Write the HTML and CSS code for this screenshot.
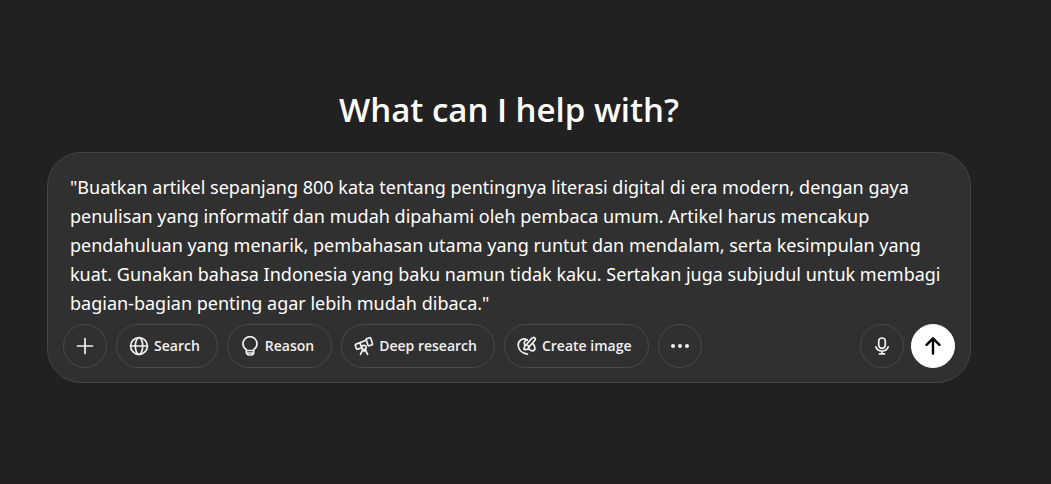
FILE: index.html
```html
<!DOCTYPE html>
<html lang="en">
<head>
<meta charset="utf-8">
<title>Chat</title>
<meta name="viewport" content="width=device-width, initial-scale=1">
<link rel="stylesheet" href="styles.css">
</head>
<body>
<main class="home">
  <h1 class="title">What can I help with?</h1>
  <form class="composer">
    <textarea class="prompt" rows="5" aria-label="Message">"Buatkan artikel sepanjang 800 kata tentang pentingnya literasi digital di era modern, dengan gaya penulisan yang informatif dan mudah dipahami oleh pembaca umum. Artikel harus mencakup pendahuluan yang menarik, pembahasan utama yang runtut dan mendalam, serta kesimpulan yang kuat. Gunakan bahasa Indonesia yang baku namun tidak kaku. Sertakan juga subjudul untuk membagi bagian-bagian penting agar lebih mudah dibaca."</textarea>
    <div class="toolbar">
      <div class="tools">
        <button class="tool round" type="button" aria-label="Add">
          <svg class="icon" viewBox="0 0 20 20"><path d="M10 2.500v15M2.500 10h15"/></svg>
        </button>
        <button class="tool" type="button">
          <svg class="icon" viewBox="0 0 20 20"><circle cx="10" cy="10" r="8.400"/><ellipse cx="10" cy="10" rx="3.700" ry="8.400"/><path d="M1.600 10h16.800"/></svg>
          <span>Search</span>
        </button>
        <button class="tool" type="button">
          <svg class="icon" viewBox="0 0 20 20"><path d="M6.300 13.400C4.300 12.200 3 10.100 3 7.700a7 7 0 0 1 14 0c0 2.400-1.300 4.500-3.300 5.700v2.900c0 1.500-1.200 2.700-2.700 2.700H9c-1.500 0-2.700-1.200-2.700-2.700zM6.300 14.500h7.400M7 17h6"/></svg>
          <span>Reason</span>
        </button>
        <button class="tool" type="button">
          <svg class="icon" viewBox="0 0 20 20"><path d="M12 3.100l3.500-1.400c.5-.2 1 .1 1.200.5l1.800 5.500c.2.500-.1 1-.6 1.200l-2.800.8c-.5.200-1-.1-1.200-.5z"/><path d="M12.300 4.300L2.100 8.100c-.6.200-.9.800-.7 1.300l1 3.100c.2.600.7.800 1.300.6l4.100-1.300M6 6.900l1.200 3.700"/><circle cx="10" cy="11.500" r="2.200"/><path d="M8.800 13.400L6.500 18.300M11.200 13.400l2.400 4.900M10 13.700v1.800"/></svg>
          <span>Deep research</span>
        </button>
        <button class="tool" type="button">
          <svg class="icon" viewBox="0 0 20 20"><path d="M10.300 4.200C6.300 1.200 1 4.200 1.200 9.300c.2 4.700 4 8.100 9.300 8.900"/><path d="M10.200 4.200C7.200 4.500 6.600 6.700 7.800 9"/><path d="M8.800 9.200l5.900-6.800c.9-1.100 2.300-1.200 3-.5s.7 1.900-.2 2.900l-6.100 6.800"/><path d="M8.900 9c1.700-.1 3 1.100 3 2.700-.7 1.700-2.800 2.200-5.100 1.400.6-1 .4-3.700 2.100-4.100z"/><path d="M15.600 7.500c3 2.700 3.200 6.800.2 7.300-2.400.3-3.200-1.400-4.500-2"/></svg>
          <span>Create image</span>
        </button>
        <button class="tool round" type="button" aria-label="More">
          <svg class="icon dots" viewBox="0 0 20 20"><circle cx="3" cy="10" r="2"/><circle cx="10" cy="10" r="2"/><circle cx="17" cy="10" r="2"/></svg>
        </button>
      </div>
      <div class="actions">
        <button class="tool round" type="button" aria-label="Dictate">
          <svg class="icon" viewBox="0 0 20 20"><rect x="6.700" y="2" width="6.600" height="10.400" rx="3.300"/><path d="M3.800 10.800c.8 2.600 3.200 4.300 6.200 4.300s5.400-1.700 6.200-4.300M10 15.100v2.700M7.500 17.900h5"/></svg>
        </button>
        <button class="send" type="submit" aria-label="Send">
          <svg class="icon arrow" viewBox="0 0 20 20"><path d="M10 17.600V2.500M3.500 8.800L10 2.300l6.500 6.500"/></svg>
        </button>
      </div>
    </div>
  </form>
</main>
</body>
</html>
```
FILE: styles.css
```css
* {
  box-sizing: border-box;
}

body {
  margin: 0;
  min-height: 100vh;
  background: #212121;
  border-bottom: 2px solid #231e20;
  color: #fff;
  font-family: "Segoe UI", "Open Sans", "Noto Sans", sans-serif;
}

.home {
  padding: 88px 80px 0 47px;
}

.title {
  margin: 0 0 20px;
  font-size: 33px;
  font-weight: 600;
  line-height: 44px;
  text-align: center;
}

.composer {
  padding: 20px 15px 14px;
  background: #303030;
  border: 1px solid #454545;
  border-radius: 34px;
}

.prompt {
  display: block;
  width: 100%;
  margin: 0;
  padding: 0 7px;
  border: 0;
  outline: 0;
  background: transparent;
  color: #fff;
  font-family: "Segoe UI", "Noto Sans", sans-serif;
  font-size: 18px;
  line-height: 29px;
  resize: none;
  overflow: hidden;
}

.toolbar {
  display: flex;
  justify-content: space-between;
  margin-top: 6px;
}

.tools {
  display: flex;
  gap: 9px;
}

.actions {
  display: flex;
  gap: 7px;
}

.tool,
.send {
  display: flex;
  align-items: center;
  justify-content: center;
  gap: 5px;
  height: 44px;
  margin: 0;
  padding: 0 17px 0 12px;
  border: 1px solid #4a4a4a;
  border-radius: 22px;
  background: transparent;
  color: #f0f0f0;
  font-family: inherit;
  font-size: 14px;
  font-weight: 600;
  line-height: 20px;
  white-space: nowrap;
}

.round,
.send {
  width: 44px;
  padding: 0;
}

.send {
  border-color: #fff;
  background: #fff;
  color: #000;
}

.icon {
  flex: none;
  width: 20px;
  height: 20px;
  fill: none;
  stroke: currentColor;
  stroke-width: 1.7;
  stroke-linecap: round;
  stroke-linejoin: round;
}

.dots {
  fill: currentColor;
  stroke: none;
}

.arrow {
  stroke-width: 2.4;
}
```
